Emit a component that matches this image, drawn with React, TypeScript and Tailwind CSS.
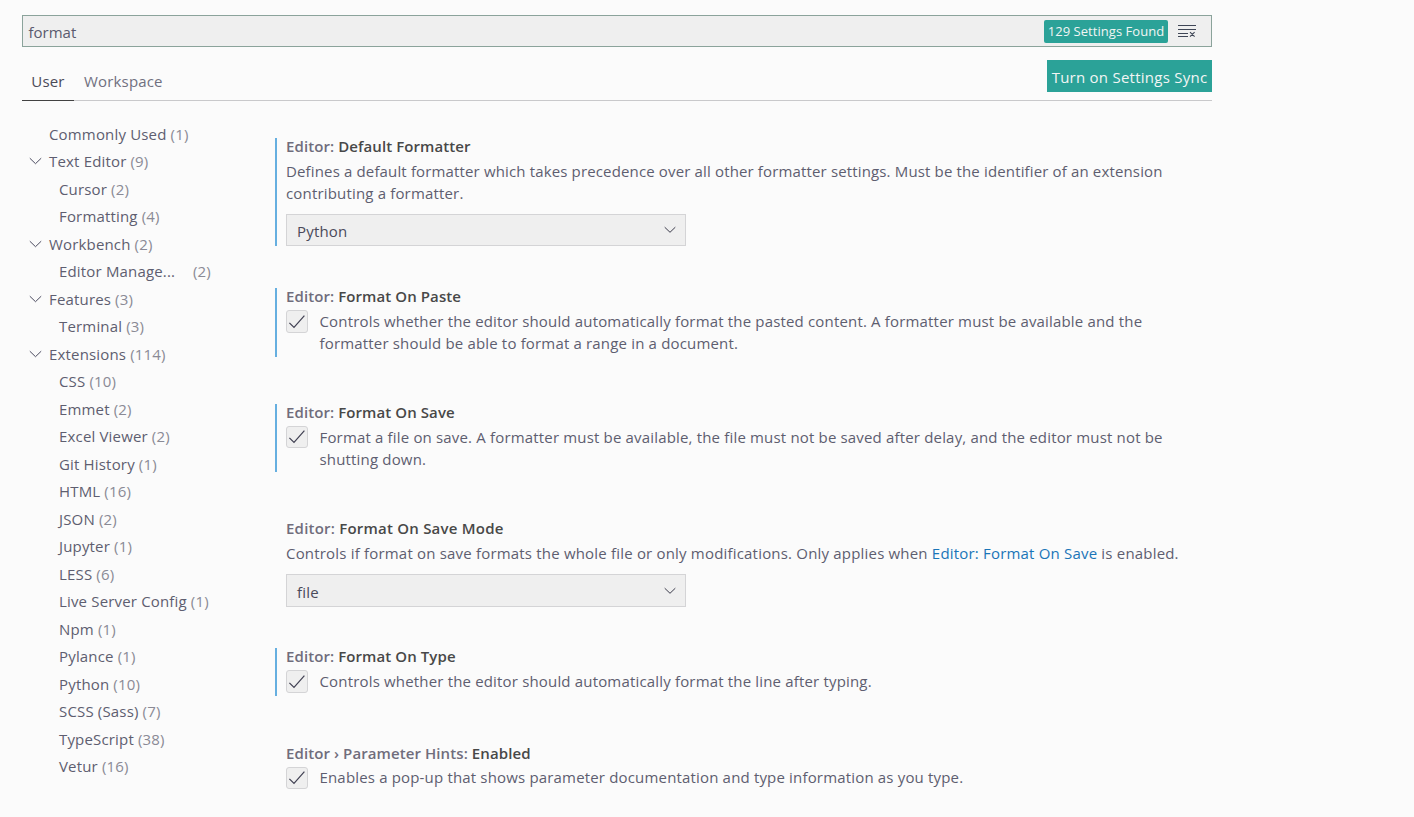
import React from "react";

type Node = { label: string; count: number; level: 0 | 1; open?: boolean; clipped?: boolean };

const tree: Node[] = [
  { label: "Commonly Used", count: 1, level: 0 },
  { label: "Text Editor", count: 9, level: 0, open: true },
  { label: "Cursor", count: 2, level: 1 },
  { label: "Formatting", count: 4, level: 1 },
  { label: "Workbench", count: 2, level: 0, open: true },
  { label: "Editor Manage...", count: 2, level: 1, clipped: true },
  { label: "Features", count: 3, level: 0, open: true },
  { label: "Terminal", count: 3, level: 1 },
  { label: "Extensions", count: 114, level: 0, open: true },
  { label: "CSS", count: 10, level: 1 },
  { label: "Emmet", count: 2, level: 1 },
  { label: "Excel Viewer", count: 2, level: 1 },
  { label: "Git History", count: 1, level: 1 },
  { label: "HTML", count: 16, level: 1 },
  { label: "JSON", count: 2, level: 1 },
  { label: "Jupyter", count: 1, level: 1 },
  { label: "LESS", count: 6, level: 1 },
  { label: "Live Server Config", count: 1, level: 1 },
  { label: "Npm", count: 1, level: 1 },
  { label: "Pylance", count: 1, level: 1 },
  { label: "Python", count: 10, level: 1 },
  { label: "SCSS (Sass)", count: 7, level: 1 },
  { label: "TypeScript", count: 38, level: 1 },
  { label: "Vetur", count: 16, level: 1 },
];

function Chevron() {
  return (
    <svg width="14" height="8" viewBox="0 0 14 8" fill="none" stroke="#4b4b60" strokeWidth="1">
      <path d="M.8 1.2 6.5 6.7 12.2 1.2" />
    </svg>
  );
}

function Row({ node }: { node: Node }) {
  return (
    <div className="flex h-[27.5px] items-center whitespace-nowrap leading-[22px]">
      <span className={node.level === 0 ? "flex w-[27px] shrink-0 justify-center" : "w-[37px] shrink-0"}>
        {node.open && <Chevron />}
      </span>
      <span className={node.clipped ? "w-[134px]" : "mr-1"}>{node.label}</span>
      <span className="text-[#8a8a95]">({node.count})</span>
    </div>
  );
}

function Check({ size }: { size: string }) {
  return (
    <span className={`flex w-[22px] shrink-0 items-center justify-center rounded-[3px] border border-[#d4d4d6] bg-[#efefef] ${size}`}>
      <svg width="18" height="16" viewBox="0 0 18 16" fill="none" stroke="#404052" strokeWidth="1.2">
        <path d="M1.4 8.8 6 13.4 16.4 1.6" />
      </svg>
    </span>
  );
}

function Select({ value, size }: { value: string; size: string }) {
  return (
    <div className={`mt-[10px] flex w-[400px] items-center justify-between border border-[#d4d4d6] bg-[#efefef] pr-[9px] pl-[10px] text-[#4a4a5a] ${size}`}>
      <span className="pt-[2px] leading-[22px]">{value}</span>
      <svg width="12" height="8" viewBox="0 0 12 8" fill="none" stroke="#3c3c4c" strokeWidth="1">
        <path d="M.7 1.2 6 6.3 11.3 1.2" />
      </svg>
    </div>
  );
}

type SettingProps = {
  scope: string;
  name: string;
  size: string;
  modified?: boolean;
  check?: string;
  heading?: string;
  children: React.ReactNode;
};

function Setting({ scope, name, size, modified, check, heading = "tracking-[0.09px]", children }: SettingProps) {
  return (
    <section className={`border-l-2 pl-[9px] ${modified ? "border-[#66afe0]" : "border-transparent"} ${size}`}>
      <h3 className={`h-[22px] leading-[17px] font-semibold whitespace-nowrap text-[#706d7c] ${heading}`}>
        {scope}: <span className="text-[#484848]">{name}</span>
      </h3>
      {check ? (
        <div className="flex items-start gap-[11.5px] leading-[22px]">
          <Check size={check} />
          <div className="whitespace-nowrap">{children}</div>
        </div>
      ) : (
        <div className="leading-[22px] whitespace-nowrap">{children}</div>
      )}
    </section>
  );
}

export default function App() {
  return (
    <main className="h-[817px] w-full overflow-hidden bg-[#fbfbfb] pt-[15px] pl-[22px] font-['Open_Sans',sans-serif] text-[15px] tracking-[0.17px] text-[#5e5e70]">
      <div className="w-[1190px]">
        <div className="flex h-8 items-center border border-[#8ba39b] bg-[#efefef] pr-[14px] pl-[5.5px]">
          <span className="flex-1 pt-[2px] tracking-normal text-[#5a5a6e]">format</span>
          <span className="flex h-[23px] w-[124px] items-center justify-center rounded-[2px] bg-[#2ba298] pt-[2px] text-[13px] tracking-[0.05px] whitespace-nowrap text-[#f2f5f4]">
            129 Settings Found
          </span>
          <svg className="ml-[10px]" width="19" height="14" viewBox="0 0 19 14" fill="none" stroke="#3f4656" strokeWidth="1.1">
            <path d="M0 1.5h18M0 5.5h18M0 9.5h10M0 12.5h10M12 8.1l4.6 4.6M16.6 8.1 12 12.7" />
          </svg>
        </div>
        <div className="flex h-[54px] justify-between border-b border-[#c9c9cb]">
          <nav className="flex items-end">
            <span className="-mb-px flex h-[39px] w-[52px] justify-center border-b border-[#424242] pt-[8px] leading-[22px] text-[#4a4a58]">User</span>
            <span className="h-[39px] pt-[9px] pl-[10px] leading-[22px] text-[#707080]">Workspace</span>
          </nav>
          <button className="mt-[13px] flex h-8 w-[165px] items-center justify-center bg-[#2ba298] pt-[2px] tracking-[0.25px] whitespace-nowrap text-[#f2f5f4]">
            Turn on Settings Sync
          </button>
        </div>
      </div>
      <div className="flex">
        <aside className="w-[253px] shrink-0 pt-[19px]">
          {tree.map((n) => (
            <Row key={n.label} node={n} />
          ))}
        </aside>
        <div className="pt-[37px]">
          <Setting scope="Editor" name="Default Formatter" modified size="mb-[42px] h-[108px]">
            <p className="tracking-[0.147px]">Defines a default formatter which takes precedence over all other formatter settings. Must be the identifier of an extension</p>
            <p>contributing a formatter.</p>
            <Select value="Python" size="h-8" />
          </Setting>
          <Setting scope="Editor" name="Format On Paste" modified check="h-[23px]" size="mb-[47px] h-[69px]">
            <p>Controls whether the editor should automatically format the pasted content. A formatter must be available and the</p>
            <p>formatter should be able to format a range in a document.</p>
          </Setting>
          <Setting scope="Editor" name="Format On Save" modified check="h-[22px]" size="mb-[48px] h-[68px]">
            <p>Format a file on save. A formatter must be available, the file must not be saved after delay, and the editor must not be</p>
            <p>shutting down.</p>
          </Setting>
          <Setting scope="Editor" name="Format On Save Mode" heading="tracking-[0.22px]" size="h-[128px]">
            <p className="tracking-[0.19px]">
              Controls if format on save formats the whole file or only modifications. Only applies when{" "}
              <a className="text-[#1a75b8]">Editor: Format On Save</a> is enabled.
            </p>
            <Select value="file" size="h-[33px]" />
          </Setting>
          <Setting scope="Editor" name="Format On Type" modified check="h-[23px]" size="mb-[49px] h-[48px]">
            <p>Controls whether the editor should automatically format the line after typing.</p>
          </Setting>
          <Setting scope="Editor › Parameter Hints" name="Enabled" check="h-[22px]" size="h-[48px]">
            <p className="leading-[21px]">Enables a pop-up that shows parameter documentation and type information as you type.</p>
          </Setting>
        </div>
      </div>
    </main>
  );
}
